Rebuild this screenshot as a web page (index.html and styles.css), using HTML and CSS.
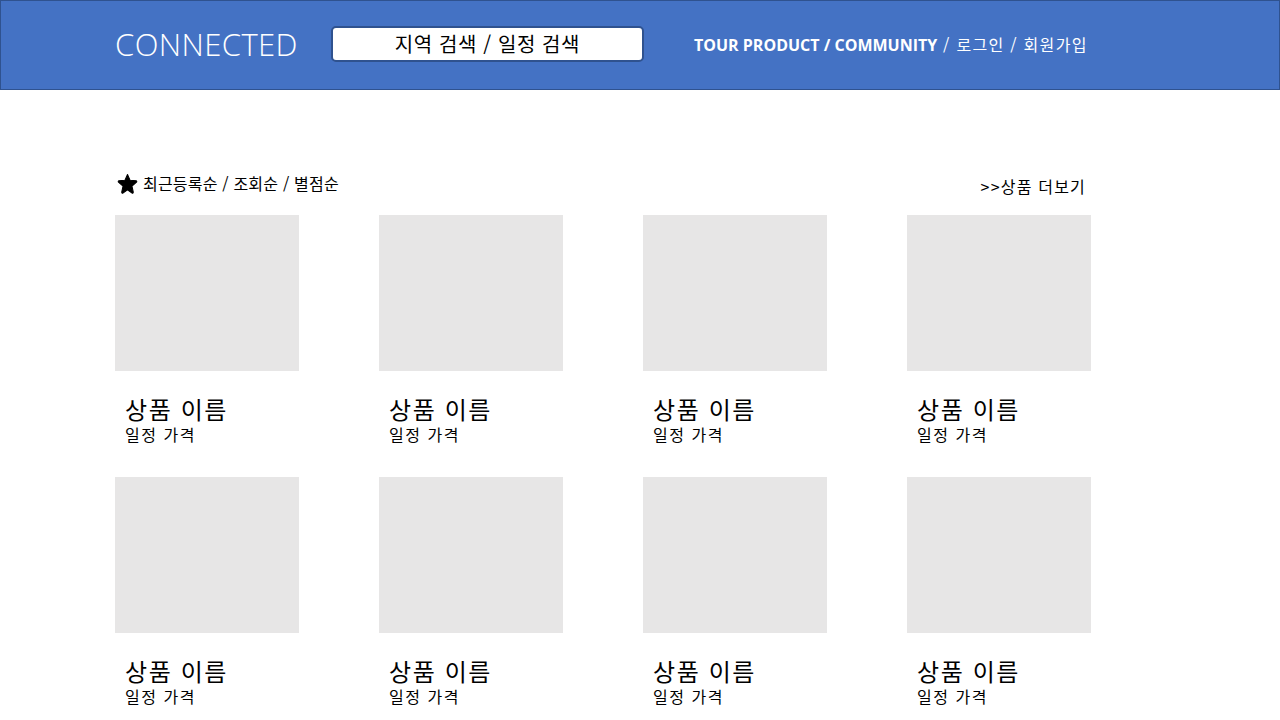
FILE: index.html
```html
<!DOCTYPE html>
<html lang="ko">
<head>
<meta charset="utf-8">
<title>CONNECTED</title>
<link rel="stylesheet" href="styles.css">
</head>
<body>
<header class="topbar">
  <div class="logo">CONNECTED</div>
  <div class="search">지역 검색 / 일정 검색</div>
  <nav class="nav"><b>TOUR PRODUCT / COMMUNITY</b> / 로그인 / 회원가입</nav>
</header>
<main class="content">
  <div class="toolbar">
    <div class="sort">
      <svg class="star" viewBox="0 0 24 24" width="21" height="21"><path d="M12 1.8 L14.9 8.2 L21.8 8.9 C22.6 9 22.9 10 22.3 10.5 L17.1 15.1 L18.6 21.9 C18.8 22.7 17.9 23.3 17.2 22.9 L12 19.3 L6.8 22.9 C6.1 23.3 5.2 22.7 5.4 21.9 L6.9 15.1 L1.7 10.5 C1.1 10 1.4 9 2.2 8.9 L9.1 8.2 Z" fill="#000" stroke="#000" stroke-width="1.2" stroke-linejoin="round"/></svg>
      <span>최근등록순 / 조회순 / 별점순</span>
    </div>
    <div class="more">&gt;&gt;상품 더보기</div>
  </div>
  <div class="grid">
    <div class="card"><div class="thumb"></div><div class="name">상품 이름</div><div class="price">일정 가격</div></div>
    <div class="card"><div class="thumb"></div><div class="name">상품 이름</div><div class="price">일정 가격</div></div>
    <div class="card"><div class="thumb"></div><div class="name">상품 이름</div><div class="price">일정 가격</div></div>
    <div class="card"><div class="thumb"></div><div class="name">상품 이름</div><div class="price">일정 가격</div></div>
    <div class="card"><div class="thumb"></div><div class="name">상품 이름</div><div class="price">일정 가격</div></div>
    <div class="card"><div class="thumb"></div><div class="name">상품 이름</div><div class="price">일정 가격</div></div>
    <div class="card"><div class="thumb"></div><div class="name">상품 이름</div><div class="price">일정 가격</div></div>
    <div class="card"><div class="thumb"></div><div class="name">상품 이름</div><div class="price">일정 가격</div></div>
  </div>
</main>
</body>
</html>
```
FILE: styles.css
```css
* { box-sizing: border-box; }
html, body { margin: 0; padding: 0; background: #fff; }
body {
  font-family: "Noto Sans CJK KR", "Noto Sans", sans-serif;
  color: #000;
  overflow: hidden;
  height: 720px;
}
.topbar {
  height: 90px;
  background: #4472c4;
  border: 1px solid #2f528f;
  display: flex;
  align-items: center;
  padding-left: 114px;
}
.logo {
  font-family: "Open Sans", "Noto Sans", sans-serif;
  font-weight: 300;
  font-size: 31px;
  letter-spacing: 0.4px;
  color: #fff;
  width: 216px;
  margin-top: -2px;
}
.search {
  width: 313px;
  height: 36px;
  background: #fff;
  border: 2px solid #2f528f;
  border-radius: 5px;
  display: flex;
  align-items: center;
  justify-content: center;
  font-size: 20px;
  letter-spacing: 0.6px;
  line-height: 1;
  margin-top: -2px;
}
.nav {
  margin-left: 50px;
  color: #fff;
  font-size: 16px;
  letter-spacing: 1.3px;
  font-family: "Noto Sans CJK KR", sans-serif;
  margin-top: -2px;
}
.nav b {
  font-family: "Open Sans", "Noto Sans", sans-serif;
  font-weight: 700;
  letter-spacing: 0;
}
.content {
  padding: 80px 0 0 115px;
  width: 1090px;
}
.toolbar {
  display: flex;
  justify-content: space-between;
  align-items: center;
  height: 28px;
  margin-bottom: 17px;
}
.sort {
  display: flex;
  align-items: center;
  gap: 5px;
  font-size: 16px;
  letter-spacing: 0.2px;
  margin-top: -2px;
  padding-left: 2px;
}
.star { display: block; }
.more {
  font-size: 16px;
  letter-spacing: 1.2px;
  margin-right: 4px;
  margin-top: 4px;
}
.grid {
  display: grid;
  grid-template-columns: repeat(4, 184px);
  column-gap: 80px;
  row-gap: 0;
}
.card {
  height: 262px;
}
.thumb {
  width: 184px;
  height: 156px;
  background: #e7e6e6;
}
.name {
  font-size: 24px;
  letter-spacing: 1.6px;
  line-height: 28px;
  padding-left: 10px;
  margin-top: 24px;
}
.price {
  font-size: 16px;
  letter-spacing: 1.5px;
  line-height: 20px;
  padding-left: 10px;
  margin-top: 1px;
}
```
